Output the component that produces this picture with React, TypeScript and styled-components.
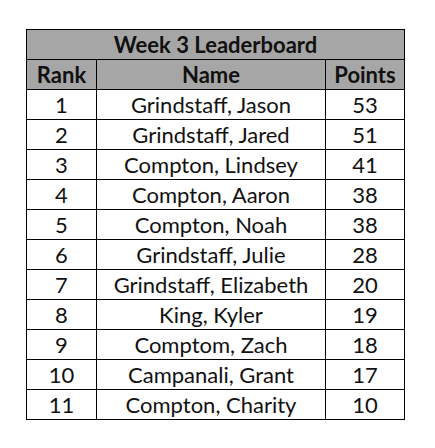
import React from "react";
import styled, { createGlobalStyle } from "styled-components";

const Global = createGlobalStyle`
  html, body { margin: 0; padding: 0; background: #ffffff; }
  body { font-family: Lato, "Open Sans", sans-serif; }
`;

const Page = styled.div`
  padding: 29px 0 0 26px;
`;

const Table = styled.table`
  border-collapse: collapse;
  table-layout: fixed;
  width: 378px;
  font-family: Lato, "Liberation Sans", sans-serif;
  font-size: 22px;
  color: #111;
`;

const Cell = styled.td<{ $head?: boolean }>`
  border: 1px solid #000;
  height: 29px;
  padding: 0;
  text-align: center;
  vertical-align: middle;
  line-height: 29px;
  white-space: nowrap;
  font-weight: ${(p) => (p.$head ? 700 : 400)};
  background: ${(p) => (p.$head ? "#a6a6a6" : "#ffffff")};
`;

const rows: [number, string, number][] = [
  [1, "Grindstaff, Jason", 53],
  [2, "Grindstaff, Jared", 51],
  [3, "Compton, Lindsey", 41],
  [4, "Compton, Aaron", 38],
  [5, "Compton, Noah", 38],
  [6, "Grindstaff, Julie", 28],
  [7, "Grindstaff, Elizabeth", 20],
  [8, "King, Kyler", 19],
  [9, "Comptom, Zach", 18],
  [10, "Campanali, Grant", 17],
  [11, "Compton, Charity", 10],
];

export default function App() {
  return (
    <>
      <Global />
      <Page>
        <Table>
          <colgroup>
            <col style={{ width: 70 }} />
            <col style={{ width: 229 }} />
            <col style={{ width: 79 }} />
          </colgroup>
          <thead>
            <tr>
              <Cell as="th" $head colSpan={3}>Week 3 Leaderboard</Cell>
            </tr>
            <tr>
              <Cell as="th" $head>Rank</Cell>
              <Cell as="th" $head>Name</Cell>
              <Cell as="th" $head>Points</Cell>
            </tr>
          </thead>
          <tbody>
            {rows.map(([r, n, p]) => (
              <tr key={r}>
                <Cell>{r}</Cell>
                <Cell>{n}</Cell>
                <Cell>{p}</Cell>
              </tr>
            ))}
          </tbody>
        </Table>
      </Page>
    </>
  );
}
